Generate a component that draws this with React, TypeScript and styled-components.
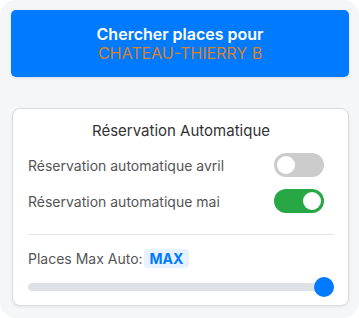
import { useState } from 'react';
import styled, { createGlobalStyle } from 'styled-components';

const GlobalStyle = createGlobalStyle`
  body {
    margin: 0;
    background: #ffffff;
    font-family: Inter, 'Liberation Sans', sans-serif;
  }
`;

const App = () => {
  const [avril, setAvril] = useState(false);
  const [mai, setMai] = useState(true);
  const [max, setMax] = useState(10);

  return (
    <>
      <GlobalStyle />
      <Panel>
        <SearchButton type="button">
          <strong>Chercher places pour</strong>
          <Station>CHATEAU-THIERRY B</Station>
        </SearchButton>
        <Card>
          <CardTitle>Réservation Automatique</CardTitle>
          <ToggleRow>
            <span>Réservation automatique avril</span>
            <Switch $on={avril} onClick={() => setAvril(!avril)} />
          </ToggleRow>
          <ToggleRow>
            <span>Réservation automatique mai</span>
            <Switch $on={mai} onClick={() => setMai(!mai)} />
          </ToggleRow>
          <Divider />
          <MaxLabel>
            Places Max Auto: <Badge>MAX</Badge>
          </MaxLabel>
          <Range type="range" min={1} max={10} value={max} onChange={(e) => setMax(Number(e.target.value))} />
        </Card>
      </Panel>
    </>
  );
};

export default App;

const Panel = styled.div`
  box-sizing: border-box;
  height: 318px;
  background: #f5f6f8;
  border-radius: 16px;
  padding: 10px 10px 12px 11px;
  display: flex;
  flex-direction: column;
  gap: 31px;
`;

const SearchButton = styled.button`
  height: 67px;
  border: none;
  border-radius: 5px;
  background: #007bff;
  color: #ffffff;
  font-family: inherit;
  font-size: 16px;
  line-height: 19px;
  display: flex;
  flex-direction: column;
  align-items: center;
  justify-content: center;
  box-shadow: 0 1px 3px rgba(0, 0, 0, 0.12);
  & strong {
    font-weight: 600;
  }
`;

const Station = styled.span`
  color: #dc8126;
`;

const Card = styled.div`
  box-sizing: border-box;
  margin-left: 1px;
  background: #ffffff;
  border: 1px solid #dcdde0;
  border-radius: 8px;
  box-shadow: 0 1px 3px rgba(0, 0, 0, 0.08);
  padding: 12px 14px 10px 15px;
  flex: 1;
`;

const CardTitle = styled.div`
  text-align: center;
  font-size: 15px;
  color: #333333;
  line-height: 20px;
  margin-bottom: 12px;
`;

const ToggleRow = styled.div`
  display: flex;
  justify-content: space-between;
  align-items: center;
  font-size: 14px;
  color: #555555;
  margin-bottom: 12px;
  padding-right: 10px;
`;

const Switch = styled.button<{ $on: boolean }>`
  position: relative;
  width: 50px;
  height: 24px;
  border: none;
  border-radius: 12px;
  padding: 0;
  background: ${(p) => (p.$on ? '#28a745' : '#cccccc')};
  cursor: pointer;
  &::after {
    content: '';
    position: absolute;
    top: 3px;
    left: ${(p) => (p.$on ? '29px' : '3px')};
    width: 18px;
    height: 18px;
    border-radius: 50%;
    background: #ffffff;
  }
`;

const Divider = styled.hr`
  border: none;
  border-top: 1px solid #e6e7ea;
  margin: 21px 0 14px;
`;

const MaxLabel = styled.div`
  font-size: 14px;
  color: #555555;
  display: flex;
  align-items: center;
`;

const Badge = styled.span`
  margin-left: 1px;
  background: #e7f1ff;
  color: #007bff;
  font-weight: 700;
  padding: 1px 6px;
  border-radius: 4px;
`;

const Range = styled.input`
  -webkit-appearance: none;
  appearance: none;
  display: block;
  width: 100%;
  height: 8px;
  margin: 15px 0 0;
  border-radius: 4px;
  background: #dee2e6;
  outline: none;
  &::-webkit-slider-thumb {
    -webkit-appearance: none;
    width: 20px;
    height: 20px;
    border-radius: 50%;
    background: #007bff;
    border: none;
  }
`;
